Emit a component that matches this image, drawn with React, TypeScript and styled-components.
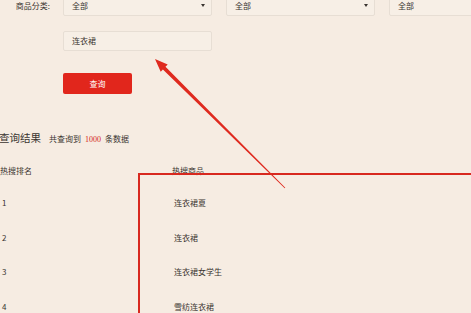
import styled, { createGlobalStyle } from "styled-components";

const GlobalStyle = createGlobalStyle`
  html, body {
    margin: 0;
    padding: 0;
    background: #f6ece2;
    overflow: hidden;
  }
  body {
    font-family: "Noto Sans CJK SC", "Noto Sans", sans-serif;
    color: #3a3430;
  }
`;

const Page = styled.div`
  position: relative;
  width: 471px;
  height: 313px;
  overflow: hidden;
`;

const Content = styled.div`
  margin-top: -5px;
  display: flex;
  flex-direction: column;
`;

const FilterRow = styled.div`
  display: flex;
  align-items: center;
  white-space: nowrap;
`;

const Label = styled.div`
  flex: 0 0 50px;
  margin-right: 13px;
  text-align: right;
  font-size: 8px;
  line-height: 21px;
`;

const Selects = styled.div`
  display: flex;
  flex-shrink: 0;
  gap: 14px;
`;

const Select = styled.div<{ $caret?: boolean }>`
  position: relative;
  flex: 0 0 149px;
  box-sizing: border-box;
  height: 21px;
  padding: 0 8px;
  font-size: 8px;
  line-height: 19px;
  background: #f7efe6;
  border: 1px solid #e7ded4;
  border-radius: 2px;
  &::after {
    content: "";
    position: absolute;
    right: 6px;
    top: 8px;
    border-left: 2.5px solid transparent;
    border-right: 2.5px solid transparent;
    border-top: 3px solid #3a3430;
    display: ${(p) => (p.$caret ? "block" : "none")};
  }
`;

const Indented = styled.div`
  margin-left: 63px;
`;

const Input = styled.div`
  box-sizing: border-box;
  width: 149px;
  height: 20px;
  margin-top: 15px;
  padding: 0 8px;
  font-size: 8px;
  line-height: 18px;
  background: #f7efe6;
  border: 1px solid #e7ded4;
  border-radius: 2px;
`;

const Button = styled.div`
  width: 69px;
  height: 21px;
  margin-top: 22px;
  background: #e1261c;
  border-radius: 2px;
  color: #fff;
  font-size: 8px;
  line-height: 21px;
  text-align: center;
`;

const ResultBar = styled.div`
  display: flex;
  align-items: baseline;
  margin-top: 37px;
  margin-left: -1px;
`;

const ResultTitle = styled.span`
  font-size: 10.5px;
  line-height: 14px;
  margin-right: 8px;
`;

const ResultNote = styled.span`
  font-size: 8px;
`;

const Count = styled.span`
  color: #d4261c;
  font-family: "Liberation Serif", serif;
  margin: 0 4px;
`;

const Table = styled.div`
  margin-top: 20px;
  display: flex;
  flex-direction: column;
`;

const Row = styled.div<{ $head?: boolean }>`
  display: grid;
  grid-template-columns: ${(p) => (p.$head ? "172px" : "174px")} 1fr;
  height: ${(p) => (p.$head ? "32px" : "34.7px")};
  align-items: start;
  font-size: 8px;
  line-height: 12px;
`;

const Rank = styled.div<{ $head?: boolean }>`
  padding-left: ${(p) => (p.$head ? "0" : "2px")};
`;

const Overlay = styled.svg`
  position: absolute;
  left: 0;
  top: 0;
  pointer-events: none;
`;

const rows = ["连衣裙夏", "连衣裙", "连衣裙女学生", "雪纺连衣裙"];

export default function App() {
  return (
    <Page>
      <GlobalStyle />
      <Content>
        <FilterRow>
          <Label>商品分类:</Label>
          <Selects>
            <Select $caret>全部</Select>
            <Select $caret>全部</Select>
            <Select>全部</Select>
          </Selects>
        </FilterRow>
        <Indented>
          <Input>连衣裙</Input>
          <Button>查询</Button>
        </Indented>
        <ResultBar>
          <ResultTitle>查询结果</ResultTitle>
          <ResultNote>
            共查询到<Count>1000</Count>条数据
          </ResultNote>
        </ResultBar>
        <Table>
          <Row $head>
            <Rank $head>热搜排名</Rank>
            <div>热搜商品</div>
          </Row>
          {rows.map((name, i) => (
            <Row key={name}>
              <Rank>{i + 1}</Rank>
              <div>{name}</div>
            </Row>
          ))}
        </Table>
      </Content>
      <Overlay width="471" height="313" viewBox="0 0 471 313">
        <rect x="139" y="174" width="360" height="160" fill="none" stroke="#d8291f" strokeWidth="2" />
        <polygon
          points="155,59 167.7,64.5 165.5,66.8 285.3,187.7 284.7,188.3 162.9,69.4 160.7,71.7"
          fill="#df2a1f"
        />
      </Overlay>
    </Page>
  );
}
